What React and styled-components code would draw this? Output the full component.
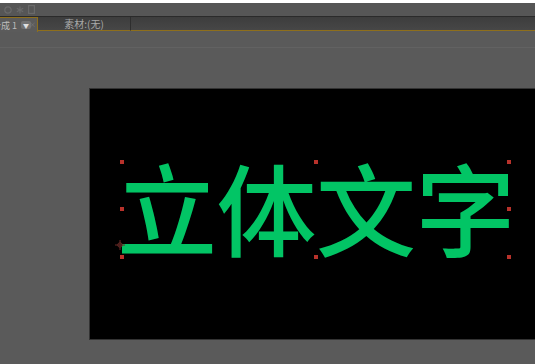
import React from "react";
import styled, { createGlobalStyle } from "styled-components";

const Global = createGlobalStyle`
  html, body { margin: 0; padding: 0; background: #ffffff; }
  body { font-family: "Noto Sans CJK SC", "Noto Sans", sans-serif; }
`;

const Frame = styled.div`
  width: 535px;
  height: 361px;
  margin-top: 3px;
  display: flex;
  flex-direction: column;
  background: #5a5a5a;
  overflow: hidden;
`;

const TopStrip = styled.div`
  height: 13px;
  background: #565656;
  border-bottom: 1px solid #2a2a2a;
  display: flex;
  align-items: center;
  gap: 4px;
  padding-left: 4px;
`;

const TabBar = styled.div`
  height: 14px;
  display: flex;
  background: linear-gradient(#3d3d3d, #474747);
`;

const ActiveTab = styled.div`
  width: 38px;
  height: 15px;
  box-sizing: border-box;
  background: #5b5b5b;
  border-top: 1px solid #8e6f1c;
  border-right: 1px solid #8e6f1c;
  display: flex;
  align-items: center;
  overflow: hidden;
  position: relative;
  z-index: 1;
`;

const TabLabel = styled.span`
  font-size: 9px;
  line-height: 1;
  color: #bdbdbd;
  white-space: nowrap;
  margin-left: ${(p) => p.$shift || 0}px;
`;

const DropBtn = styled.span`
  width: 10px;
  height: 8px;
  margin-left: 4px;
  border-radius: 2px;
  background: #727272;
  display: flex;
  align-items: center;
  justify-content: center;
  font-size: 6px;
  color: #e0e0e0;
  flex-shrink: 0;
`;

const Close = styled.span`
  position: absolute;
  right: 1px;
  top: 3px;
  font-size: 7px;
  line-height: 1;
  color: #7a7a7a;
`;

const Tab = styled.div`
  width: ${(p) => p.$w}px;
  box-sizing: border-box;
  border-bottom: 1px solid #8e6f1c;
  border-right: 1px solid #2e2e2e;
  display: flex;
  align-items: center;
  justify-content: center;
`;

const TabText = styled.span`
  font-size: 10px;
  color: #a9a9a9;
  line-height: 1;
  white-space: nowrap;
`;

const Filler = styled.div`
  flex: 1;
  border-bottom: 1px solid #8e6f1c;
`;

const Panel = styled.div`
  flex: 1;
  display: flex;
  flex-direction: column;
  background: #5a5a5a;
`;

const PanelHeader = styled.div`
  height: 16px;
  border-bottom: 1px solid #626262;
`;

const Viewer = styled.div`
  flex: 1;
  padding: 40px 0 0 89px;
`;

const Canvas = styled.div`
  width: 446px;
  height: 252px;
  box-sizing: border-box;
  background: #000;
  border-left: 1px solid #333;
  border-top: 1px solid #333;
  border-bottom: 1px solid #333;
  position: relative;
`;

const Title = styled.div`
  position: absolute;
  left: 27px;
  top: 67px;
  font-family: "Noto Sans CJK SC", sans-serif;
  font-size: 100px;
  font-weight: 500;
  line-height: 100px;
  color: #02c565;
  white-space: nowrap;
  letter-spacing: -0.5px;
`;

const Handle = styled.span`
  position: absolute;
  width: 4px;
  height: 4px;
  background: #b8322b;
  left: ${(p) => p.$x - 2}px;
  top: ${(p) => p.$y - 2}px;
`;

const Anchor = styled.svg`
  position: absolute;
  left: 25px;
  top: 151px;
`;

const handles = [
  [32, 73], [226, 73], [419, 73],
  [32, 120], [419, 120],
  [32, 168], [226, 168], [419, 168],
];

export default function App() {
  return (
    <>
      <Global />
      <Frame>
        <TopStrip>
          <svg width="8" height="8" viewBox="0 0 8 8">
            <circle cx="4" cy="4" r="3.2" fill="none" stroke="#6a6a6a" strokeWidth="1.2" />
          </svg>
          <svg width="8" height="8" viewBox="0 0 8 8">
            <path d="M4 0.5V7.5M0.8 2.2L7.2 5.8M0.8 5.8L7.2 2.2" stroke="#6a6a6a" strokeWidth="1.2" />
          </svg>
          <svg width="7" height="9" viewBox="0 0 7 9">
            <rect x="0.6" y="0.6" width="5.8" height="7.8" fill="none" stroke="#6a6a6a" strokeWidth="1.2" />
          </svg>
        </TopStrip>
        <TabBar>
          <ActiveTab>
            <TabLabel $shift={-8}>合成 1</TabLabel>
            <DropBtn>▼</DropBtn>
            <Close>×</Close>
          </ActiveTab>
          <Tab $w={93}>
            <TabText>素材:(无)</TabText>
          </Tab>
          <Filler />
        </TabBar>
        <Panel>
          <PanelHeader />
          <Viewer>
            <Canvas>
              <Title>立体文字</Title>
              {handles.map(([x, y], i) => (
                <Handle key={i} $x={x} $y={y} />
              ))}
              <Anchor width="10" height="10" viewBox="0 0 10 10">
                <path d="M5 0V10M0 5H10" stroke="#6b2a26" strokeWidth="1" />
                <circle cx="5" cy="5" r="2.2" fill="none" stroke="#6b2a26" strokeWidth="1" />
              </Anchor>
            </Canvas>
          </Viewer>
        </Panel>
      </Frame>
    </>
  );
}
